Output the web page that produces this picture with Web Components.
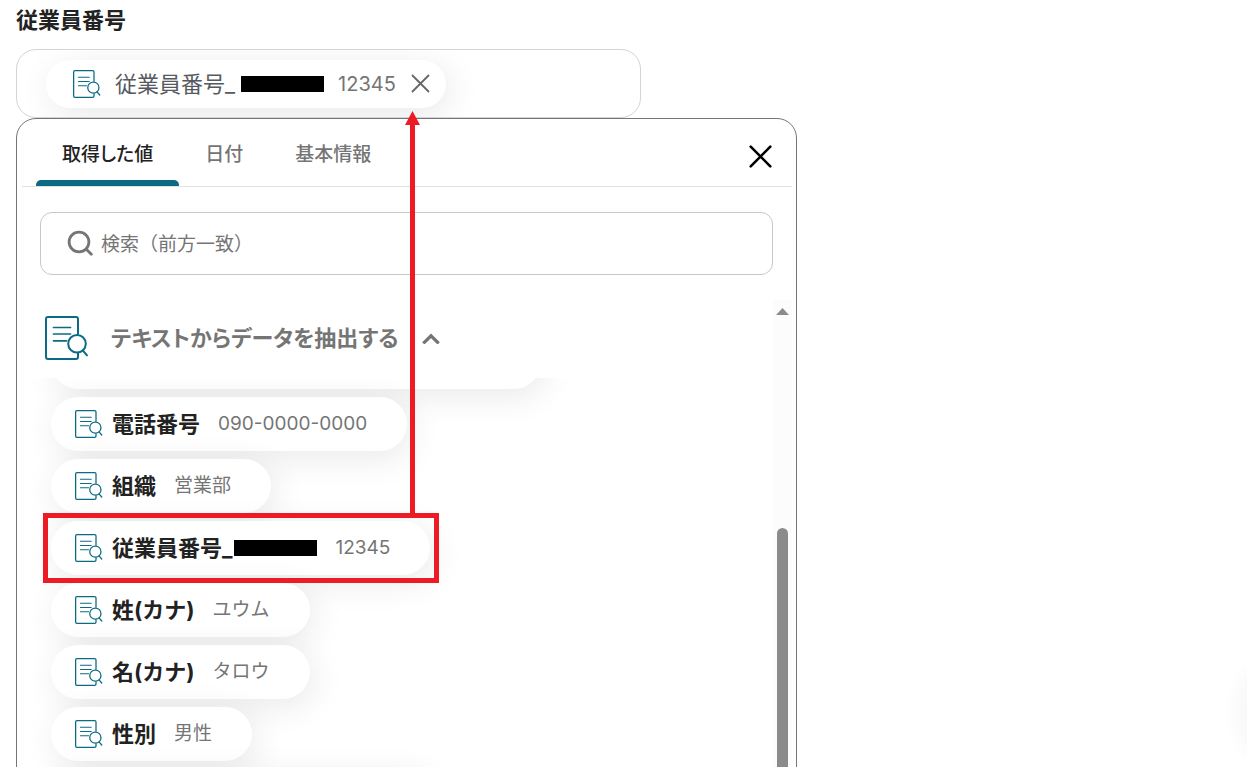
<!DOCTYPE html>
<html lang="ja">
<head>
<meta charset="utf-8">
<meta name="viewport" content="width=device-width, initial-scale=1">
<title>従業員番号</title>
<style>
  body {
    margin: 0;
    height: 100vh;
    overflow: hidden;
    background: #fff;
    color: #222;
    font-family: Inter, "Noto Sans CJK JP", sans-serif;
    line-height: 28px;
    --teal: #0b6b83;
    --gray: #757575;
    --mark: #ed1c24;
    --pill-shadow: 4px 7px 34px rgba(0, 0, 0, .09);
  }
</style>
</head>
<body>
<value-picker-page></value-picker-page>

<script>
/** Small base: clones the class's static html into an open shadow root. */
class BaseElement extends HTMLElement {
  constructor() {
    super();
    const t = document.createElement("template");
    t.innerHTML = this.constructor.html;
    this.attachShadow({ mode: "open" }).append(t.content.cloneNode(true));
  }
}

// Document with a magnifier, used by every extracted value
class DocIcon extends BaseElement {
  static html = `
    <style>
      :host { display: block; flex: none; width: 28px; height: 28px; color: var(--teal); }
      :host([large]) { width: 44px; height: 44px; }
      svg { display: block; width: 100%; height: 100%; }
    </style>
    <svg viewBox="0 0 44 44" fill="none" stroke="currentColor" stroke-width="2" aria-hidden="true">
      <path d="M33 18.5V3a2 2 0 0 0-2-2H3a2 2 0 0 0-2 2v38a2 2 0 0 0 2 2h28a2 2 0 0 0 2-2v-4.5"/>
      <path d="M8.5 11.5h17M8.5 18h17M8.5 24.8h13" stroke-linecap="round" stroke-width="1.7"/>
      <circle cx="32" cy="27.7" r="8.8"/>
      <path d="M37.8 34.5l4.2 4.8" stroke-linecap="round"/>
    </svg>`;
}
customElements.define("doc-icon", DocIcon);

// Blacked out part of a name
class RedactedText extends BaseElement {
  static html = `
    <style>
      :host { display: block; flex: none; width: 83px; height: 16px; background: #000; }
    </style>`;
}
customElements.define("redacted-text", RedactedText);

/** One value: name in the default slot, sample in slot="value". */
class DataPill extends BaseElement {
  static html = `
    <style>
      :host { display: block; width: fit-content; }
      button {
        display: flex; align-items: center; box-sizing: border-box;
        height: 54px; margin: 0; padding: 0 40px 0 24px; border: 0; border-radius: 27px;
        background: #fff; box-shadow: var(--pill-shadow);
        font: inherit; color: inherit; white-space: nowrap;
      }
      :host([wide]) button { width: 490px; }
      :host([medium]) button { width: 380px; }
      .name { display: flex; align-items: center; gap: 2px; margin: 0 18px 0 9px; font-size: 22px; font-weight: 700; }
      .value { font-size: 19px; color: var(--gray); }
    </style>
    <button type="button">
      <doc-icon></doc-icon>
      <span class="name"><slot></slot></span>
      <span class="value"><slot name="value"></slot></span>
    </button>`;
}
customElements.define("data-pill", DataPill);

/** Selected value inside the field, with a remove button. */
class SelectedChip extends BaseElement {
  static html = `
    <style>
      :host {
        display: flex; align-items: center; box-sizing: border-box; width: fit-content;
        height: 48px; padding: 0 16px 0 27px; border-radius: 24px;
        background: #fff; box-shadow: var(--pill-shadow); white-space: nowrap;
      }
      .name { display: flex; align-items: center; gap: 6px; margin: 0 14px; font-size: 22px; color: #555a60; }
      .value { font-size: 20px; color: var(--gray); }
      button { display: flex; margin: 0 0 0 15px; padding: 0; border: 0; background: none; color: #666; }
    </style>
    <doc-icon></doc-icon>
    <span class="name"><slot></slot></span>
    <span class="value"><slot name="value"></slot></span>
    <button type="button" aria-label="削除">
      <svg width="19" height="19" viewBox="0 0 19 19" fill="none" stroke="currentColor" stroke-width="1.8" stroke-linecap="round"><path d="M1.5 1.5l16 16M17.5 1.5l-16 16"/></svg>
    </button>`;
}
customElements.define("selected-chip", SelectedChip);

class ValueField extends BaseElement {
  static html = `
    <style>
      :host { display: block; max-width: 625px; }
      .label { height: 49px; font-size: 22px; line-height: 40px; font-weight: 700; }
      .box {
        display: flex; align-items: center; box-sizing: border-box;
        height: 69px; padding-left: 29px; border: 1px solid #d0d4dc; border-radius: 20px; overflow: hidden;
      }
    </style>
    <div class="label" id="label"><slot name="label"></slot></div>
    <div class="box" role="group" aria-labelledby="label"><slot></slot></div>`;
}
customElements.define("value-field", ValueField);

class TabButton extends BaseElement {
  static html = `
    <style>
      :host { display: flex; flex-direction: column; }
      button {
        flex: 1; margin: 0; padding: 10px 26px 0; border: 0;
        background: none; color: var(--gray); font: inherit; font-size: 19px; font-weight: 500;
        font-feature-settings: "palt";
      }
      .bar { height: 6px; border-radius: 5px 5px 0 0; }
      :host([selected]) button { color: #222; }
      :host([selected]) .bar { background: var(--teal); }
    </style>
    <button type="button" role="tab"><slot></slot></button>
    <div class="bar"></div>`;
}
customElements.define("tab-button", TabButton);

class TabBar extends BaseElement {
  static html = `
    <style>
      :host {
        display: flex; justify-content: space-between; align-items: center; box-sizing: border-box;
        height: 68px; margin: 0 4px 0 5px; padding: 0 20px 0 14px; border-bottom: 1px solid #e2e2e2;
      }
      .tabs { display: flex; height: 100%; }
      .close { display: flex; padding: 8px 0 0; border: 0; background: none; color: #000; }
    </style>
    <div class="tabs" role="tablist"><slot></slot></div>
    <button class="close" type="button" aria-label="閉じる">
      <svg width="23" height="23" viewBox="0 0 23 23" fill="none" stroke="currentColor" stroke-width="2.6" stroke-linecap="round"><path d="M1.7 1.7l19.6 19.6M21.3 1.7L1.7 21.3"/></svg>
    </button>`;
}
customElements.define("tab-bar", TabBar);

class SearchBox extends BaseElement {
  static html = `
    <style>
      :host { display: block; margin: 25px 23px; }
      label {
        display: flex; align-items: center; gap: 7px; box-sizing: border-box;
        height: 63px; padding: 0 26px; border: 1px solid #c8c8c8; border-radius: 12px; color: var(--gray);
      }
      svg { flex: none; }
      input {
        flex: 1; min-width: 0; height: 28px; padding: 2px 0 0; border: 0; outline: 0; background: none;
        font: inherit; font-size: 19px; color: #222;
      }
      input::placeholder { color: var(--gray); opacity: 1; }
    </style>
    <label>
      <svg width="27" height="27" viewBox="0 0 27 27" fill="none" stroke="currentColor" stroke-width="2.8" stroke-linecap="round" aria-hidden="true">
        <circle cx="12" cy="12" r="9.9"/><path d="M19.3 19.3l5 5"/>
      </svg>
      <input type="text" placeholder="検索（前方一致）" aria-label="検索">
    </label>`;
}
customElements.define("search-box", SearchBox);

/** Collapsible group with its list scrolled part way down. */
class ValueGroup extends BaseElement {
  static html = `
    <style>
      :host { display: grid; grid-template-columns: minmax(0, 1fr) 19px; margin-right: 4px; }
      .head {
        display: flex; align-items: center; width: 100%; height: 78px; margin: 0; padding: 0 0 2px 28px;
        border: 0; background: #fff; color: var(--gray); font: inherit; font-size: 22px; font-weight: 700;
      }
      .title { margin: 0 24px 0 22px; font-feature-settings: "palt"; white-space: nowrap; }
      .list { display: flex; flex-direction: column; gap: 8px; padding: 0 34px; overflow: hidden; }
      /* first row is mostly scrolled away */
      ::slotted(data-pill:first-of-type) { margin-top: -43px; }
      .scroll { display: flex; flex-direction: column; align-items: center; background: #fcfcfc; }
      .up { margin: 8px 0 213px; }
      .thumb { flex: 1; width: 11px; border-radius: 6px; background: #8b8b8b; }
    </style>
    <div>
      <button class="head" type="button" aria-expanded="true">
        <doc-icon large></doc-icon>
        <span class="title"><slot name="title"></slot></span>
        <svg width="18" height="12" viewBox="0 0 18 12" fill="none" stroke="currentColor" stroke-width="3.2"><path d="M1.3 11.4L9 3.8l7.7 7.6"/></svg>
      </button>
      <div class="list"><slot></slot></div>
    </div>
    <div class="scroll">
      <svg class="up" width="13" height="7" viewBox="0 0 13 7" fill="#8b8b8b"><path d="M6.5 0L13 7H0z"/></svg>
      <div class="thumb"></div>
    </div>`;
}
customElements.define("value-group", ValueGroup);

class PickerPanel extends BaseElement {
  static html = `
    <style>
      :host {
        display: block; box-sizing: border-box; max-width: 781px;
        border: 1px solid #757575; border-radius: 20px; background: #fff;
      }
    </style>
    <slot></slot>`;
}
customElements.define("picker-panel", PickerPanel);

/** Red frame and the arrow that runs up from it, laid over the page. */
class CalloutMark extends BaseElement {
  static html = `
    <style>
      :host { position: absolute; left: 43px; top: 111px; width: 396px; height: 472px; pointer-events: none; }
      svg { display: block; }
    </style>
    <svg width="396" height="472" viewBox="0 0 396 472" fill="none" stroke="var(--mark)" stroke-width="5" aria-hidden="true">
      <rect x="2.5" y="404.5" width="391" height="65"/>
      <path d="M369.5 12v392"/>
      <path d="M369.5 0l7.5 14h-15z" fill="var(--mark)" stroke="none"/>
    </svg>`;
}
customElements.define("callout-mark", CalloutMark);

// Faint round glow at the right edge of the window
class EdgeGlow extends BaseElement {
  static html = `
    <style>
      :host {
        position: absolute; right: 0; top: 640px; width: 24px; height: 144px; pointer-events: none;
        background: radial-gradient(circle at 72px 50%, rgba(0, 0, 0, .03) 44px, transparent 72px);
      }
    </style>`;
}
customElements.define("edge-glow", EdgeGlow);

class ValuePickerPage extends BaseElement {
  static html = `
    <style>
      :host { display: block; position: relative; padding: 0 16px; }
    </style>
    <value-field>
      <span slot="label">従業員番号</span>
      <selected-chip>従業員番号_<redacted-text></redacted-text><span slot="value">12345</span></selected-chip>
    </value-field>
    <picker-panel>
      <tab-bar>
        <tab-button selected>取得した値</tab-button>
        <tab-button>日付</tab-button>
        <tab-button>基本情報</tab-button>
      </tab-bar>
      <search-box></search-box>
      <value-group>
        <span slot="title">テキストからデータを抽出する</span>
        <data-pill wide></data-pill>
        <data-pill>電話番号<span slot="value">090-0000-0000</span></data-pill>
        <data-pill>組織<span slot="value">営業部</span></data-pill>
        <data-pill>従業員番号_<redacted-text></redacted-text><span slot="value">12345</span></data-pill>
        <data-pill>姓(カナ)<span slot="value">ユウム</span></data-pill>
        <data-pill>名(カナ)<span slot="value">タロウ</span></data-pill>
        <data-pill>性別<span slot="value">男性</span></data-pill>
        <data-pill medium></data-pill>
      </value-group>
    </picker-panel>
    <callout-mark></callout-mark>
    <edge-glow></edge-glow>`;
}
customElements.define("value-picker-page", ValuePickerPage);
</script>
</body>
</html>
